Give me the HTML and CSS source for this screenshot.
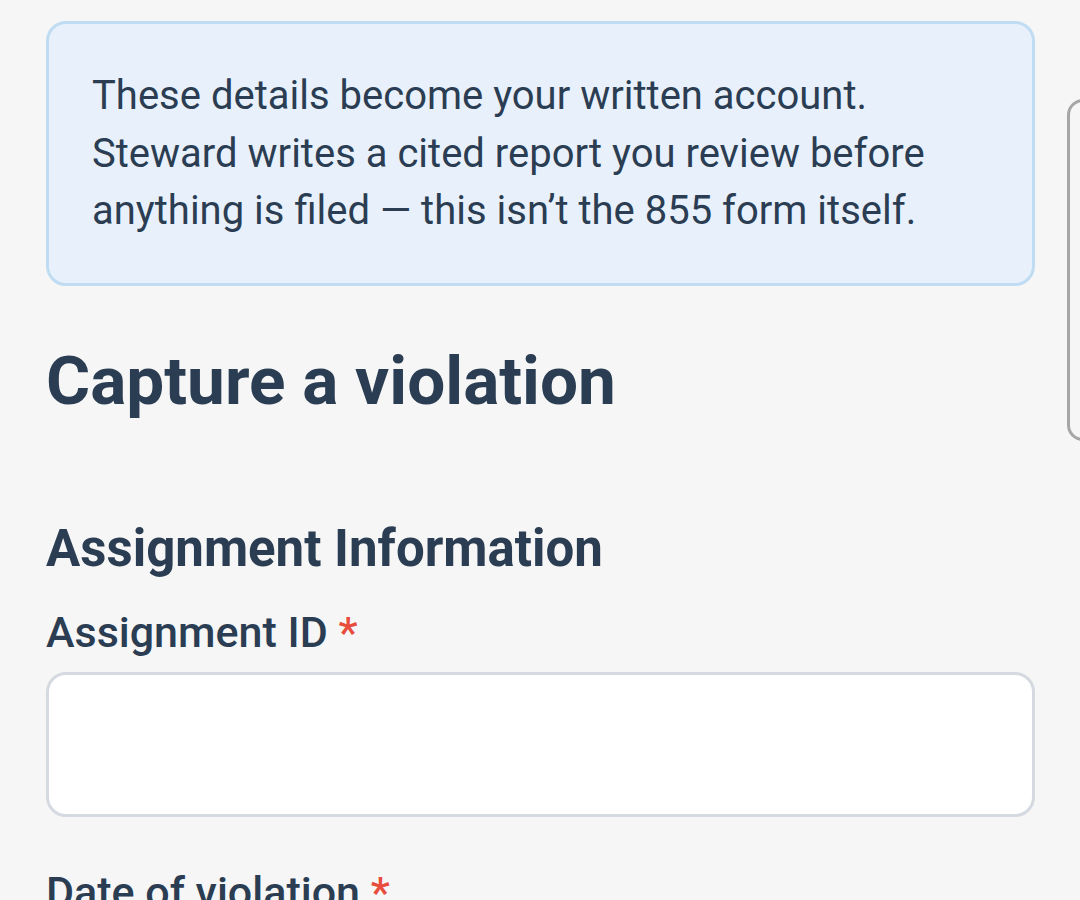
FILE: index.html
```html
<!DOCTYPE html>
<html lang="en">

<head>
  <meta charset="UTF-8" />
  <title>Capture a violation</title>
  <link rel="stylesheet" href="styles.css">
</head>

<body>
  <main class="page">
    <div class="notice">
      <p>These details become your written account. Steward writes a cited report you review before anything is filed — this isn’t the 855 form itself.</p>
    </div>

    <h1 class="page-title">Capture a violation</h1>

    <section class="form-section">
      <h2>Assignment Information</h2>

      <div class="field">
        <label for="assignment-id">Assignment ID <span class="req">*</span></label>
        <input type="text" id="assignment-id" />
      </div>

      <div class="field">
        <label for="violation-date">Date of violation <span class="req">*</span></label>
      </div>
    </section>
  </main>

  <!-- next card peeking in from the right -->
  <div class="peek"></div>
</body>

</html>
```

FILE: styles.css
```css
* {
  box-sizing: border-box;
}

body {
  font-family: Roboto, "Noto Sans", Arial, sans-serif;
  background: #f6f6f6;
  color: #2b3d52;
  margin: 0;
  overflow: hidden;
}

.page {
  width: 1080px;
  padding: 21px 45px 0 46px;
}

.notice {
  background-color: #e8f1fb;
  border: 3px solid #bfdcf3;
  border-radius: 20px;
  padding: 43px 43px;
}

.notice p {
  margin: 0;
  font-size: 40px;
  line-height: 57.5px;
}

.page-title {
  font-size: 67.5px;
  font-weight: 700;
  line-height: 1.2;
  margin: 54.5px 0 0 0;
}

.form-section h2 {
  font-size: 51px;
  font-weight: 700;
  line-height: 1.2;
  margin: 97px 0 0 0;
}

.field {
  display: flex;
  flex-direction: column;
}

.field label {
  font-size: 43px;
  font-weight: 500;
  line-height: 1.2;
  margin-top: 28px;
}

.field + .field label {
  margin-top: 50px;
}

.req {
  color: #e74c3c;
}

.field input {
  margin-top: 13px;
  height: 145px;
  background: #ffffff;
  border: 3px solid #d5dae1;
  border-radius: 20px;
  font-size: 43px;
  padding: 0 32px;
}

.peek {
  position: absolute;
  left: 1067px;
  top: 99px;
  width: 60px;
  height: 342px;
  border: 3px solid #a6a6a6;
  border-radius: 16px;
}
```
